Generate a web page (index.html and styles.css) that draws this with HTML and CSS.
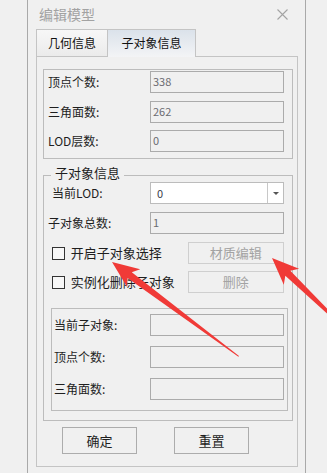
FILE: index.html
```html
<!DOCTYPE html>
<html lang="zh-CN">
<head>
    <meta charset="UTF-8">
    <meta name="viewport" content="width=device-width, initial-scale=1.0">
    <title>编辑模型</title>
    <link rel="stylesheet" href="styles.css">
</head>
<body>

    <div class="window">
        <div class="titlebar">
            <span class="title">编辑模型</span>
            <svg class="close" width="11" height="11" viewBox="0 0 11 11">
                <path d="M0.5 0.5 L10.5 10.5 M10.5 0.5 L0.5 10.5" stroke="#a3a3a3" stroke-width="1.1" fill="none"/>
            </svg>
        </div>

        <div class="tabs">
            <div class="tab">几何信息</div>
            <div class="tab tab-active">子对象信息</div>
        </div>

        <div class="panel">
            <div class="group geo">
                <div class="row">
                    <label>顶点个数:</label>
                    <div class="field">338</div>
                </div>
                <div class="row">
                    <label>三角面数:</label>
                    <div class="field">262</div>
                </div>
                <div class="row">
                    <label>LOD层数:</label>
                    <div class="field">0</div>
                </div>
            </div>

            <div class="group sub">
                <div class="group-title">子对象信息</div>
                <div class="row row-lod">
                    <label>当前LOD:</label>
                    <div class="select">
                        <span class="select-value">0</span>
                        <span class="select-btn"></span>
                    </div>
                </div>
                <div class="row row-count">
                    <label>子对象总数:</label>
                    <div class="field">1</div>
                </div>
                <div class="check-row first">
                    <span class="checkbox"></span>
                    <span class="check-label">开启子对象选择</span>
                    <button class="btn btn-disabled">材质编辑</button>
                </div>
                <div class="check-row">
                    <span class="checkbox"></span>
                    <span class="check-label">实例化删除子对象</span>
                    <button class="btn btn-disabled">删除</button>
                </div>

                <div class="group inner">
                    <div class="row">
                        <label>当前子对象:</label>
                        <div class="field"></div>
                    </div>
                    <div class="row">
                        <label>顶点个数:</label>
                        <div class="field"></div>
                    </div>
                    <div class="row">
                        <label>三角面数:</label>
                        <div class="field"></div>
                    </div>
                </div>
            </div>

            <div class="actions">
                <button class="btn btn-main">确定</button>
                <button class="btn btn-main">重置</button>
            </div>
        </div>
    </div>

    <!-- red annotation arrows drawn over the dialog -->
    <svg class="annot" width="327" height="473" viewBox="0 0 327 473">
        <polygon transform="translate(112,262) rotate(36.7)" points="0,0 27,-11 22,-3.6 158,-0.5 158,0.5 22,3.6 27,11" fill="#f03a37"/>
        <polygon transform="translate(272,258) rotate(44)" points="0,0 27,-11 22,-3.6 95,-1.2 95,1.2 22,3.6 27,11" fill="#f03a37"/>
    </svg>

</body>
</html>
```

FILE: styles.css
```css
* {
    box-sizing: border-box;
}
body {
    margin: 0;
    padding: 0;
    background-color: #f0f0f0;
    font-family: "Noto Sans CJK SC", "Noto Sans", sans-serif;
    color: #1e1e1e;
    height: 473px;
    overflow: hidden;
    position: relative;
}
.window {
    margin-left: 27px;
    width: 279px;
    height: 473px;
    border-left: 1px solid #a9a9a9;
    border-right: 1px solid #a9a9a9;
}
.titlebar {
    height: 29px;
    display: flex;
    align-items: center;
    justify-content: space-between;
    padding: 0 17px 1px 11px;
}
.title {
    font-size: 14px;
    line-height: 16px;
    color: #a2a2a2;
}
.close {
    display: block;
}

/* tabs */
.tabs {
    display: flex;
    margin-left: 8px;
    height: 27px;
}
.tab {
    height: 27px;
    font-size: 12px;
    line-height: 25px;
    text-align: center;
    color: #111;
    border-top: 1px solid #c4c4c4;
}
.tab:first-child {
    width: 72px;
    border-left: 1px solid #c4c4c4;
    border-right: 1px solid #c4c4c4;
    background: linear-gradient(#f7f7f7, #ebebeb);
}
.tab-active {
    width: 88px;
    height: 28px;
    margin-bottom: -1px;
    border-right: 1px solid #c4c4c4;
    background: linear-gradient(#dbe2ea, #f3f4f6);
    position: relative;
}

.panel {
    margin-left: 8px;
    width: 262px;
    height: 411px;
    border: 1px solid #c4c4c4;
    padding: 12px 4px 0 6px;
}

/* group boxes */
.group {
    border: 1px solid #bcbcbc;
}
.geo {
    width: 250px;
    height: 90px;
    padding: 1px 8px 0 4px;
    display: flex;
    flex-direction: column;
    gap: 7.5px;
}
.row {
    display: flex;
    align-items: center;
    height: 22px;
}
.row label {
    width: 102px;
    font-size: 12px;
    line-height: 16px;
    color: #1e1e1e;
}
.field {
    width: 134px;
    height: 22px;
    border: 1px solid #ababab;
    background-color: #f0f0f0;
    font-size: 11px;
    line-height: 19px;
    padding-left: 2px;
    color: #6b6b70;
}

.sub {
    width: 250px;
    height: 246px;
    margin-top: 16px;
    padding: 0 8px 0 0;
}
.group-title {
    width: fit-content;
    margin: -11px 0 0 7px;
    padding: 0 4px;
    font-size: 13px;
    line-height: 16px;
    background-color: #f0f0f0;
}
.sub .row label {
    padding-left: 4px;
    width: 106px;
}
.row-lod {
    margin-top: 1px;
}
.sub .row-lod label {
    padding-left: 8px;
}
.row-count {
    margin-top: 8px;
}
.select {
    width: 134px;
    height: 22px;
    border: 1px solid #bcbcbc;
    background-color: #fff;
    display: flex;
}
.select-value {
    flex: 1;
    font-size: 11px;
    line-height: 20px;
    padding-left: 6px;
    color: #3a3a4a;
    border-right: 1px solid #c8c8c8;
}
.select-btn {
    width: 15px;
    position: relative;
}
.select-btn::after {
    content: "";
    position: absolute;
    left: 5px;
    top: 9px;
    border-left: 3px solid transparent;
    border-right: 3px solid transparent;
    border-top: 3px solid #555;
}

/* checkbox rows */
.check-row {
    display: flex;
    align-items: center;
    height: 22px;
    margin-top: 7px;
    padding-left: 8px;
}
.check-row.first {
    margin-top: 8px;
}
.checkbox {
    width: 13px;
    height: 13px;
    border: 1px solid #333;
    background-color: #f7f7f7;
}
.check-label {
    width: 120px;
    margin-left: 6px;
    font-size: 13px;
    line-height: 16px;
    white-space: nowrap;
}
.btn {
    font-family: "Noto Sans CJK SC", sans-serif;
    font-size: 13px;
    line-height: 16px;
    padding: 0;
    background-color: #f0f0f0;
    border: 1px solid #acacac;
    color: #1e1e1e;
}
.btn-disabled {
    width: 99px;
    height: 22px;
    border-color: #cfcfcf;
    color: #a3a3a3;
}

.inner {
    width: 237px;
    height: 103px;
    margin: 15px 0 0 7px;
    padding: 5px 0 0 2px;
    display: flex;
    flex-direction: column;
    gap: 10px;
}
.inner .row label {
    width: 96px;
    padding-left: 0;
}

.actions {
    display: flex;
    gap: 37px;
    margin: 6px 0 0 19px;
}
.btn-main {
    width: 75px;
    height: 27px;
}

.annot {
    position: absolute;
    left: 0;
    top: 0;
    pointer-events: none;
}
```
